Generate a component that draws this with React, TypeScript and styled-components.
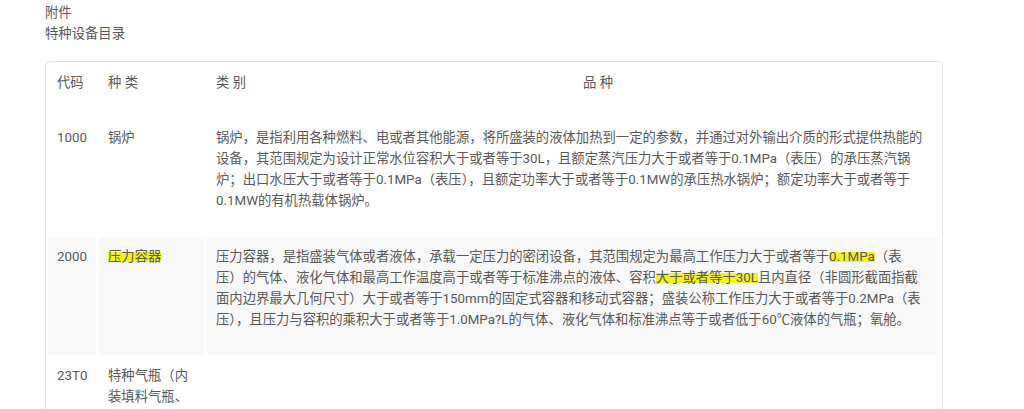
import React from 'react';
import styled, { createGlobalStyle } from 'styled-components';

const GlobalStyle = createGlobalStyle`
  html, body {
    margin: 0;
    padding: 0;
    background: #fff;
    overflow: hidden;
  }
  body {
    font-family: Roboto, "Noto Sans CJK SC", sans-serif;
    font-size: 13.33px;
    line-height: 21px;
    color: #595959;
  }
`;

function Mark({ children }: { children: React.ReactNode }) {
  return <Styled.Highlight>{children}</Styled.Highlight>;
}

const rows: { code: string; name: React.ReactNode; lines: React.ReactNode[] }[] = [
  {
    code: '1000',
    name: '锅炉',
    lines: [
      '锅炉，是指利用各种燃料、电或者其他能源，将所盛装的液体加热到一定的参数，并通过对外输出介质的形式提供热能的',
      '设备，其范围规定为设计正常水位容积大于或者等于30L，且额定蒸汽压力大于或者等于0.1MPa（表压）的承压蒸汽锅',
      '炉；出口水压大于或者等于0.1MPa（表压），且额定功率大于或者等于0.1MW的承压热水锅炉；额定功率大于或者等于',
      '0.1MW的有机热载体锅炉。',
    ],
  },
  {
    code: '2000',
    name: <Mark>压力容器</Mark>,
    lines: [
      <>压力容器，是指盛装气体或者液体，承载一定压力的密闭设备，其范围规定为最高工作压力大于或者等于<Mark>0.1MPa</Mark>（表</>,
      <>压）的气体、液化气体和最高工作温度高于或者等于标准沸点的液体、容积<Mark>大于或者等于30L</Mark>且内直径（非圆形截面指截</>,
      '面内边界最大几何尺寸）大于或者等于150mm的固定式容器和移动式容器；盛装公称工作压力大于或者等于0.2MPa（表',
      '压），且压力与容积的乘积大于或者等于1.0MPa?L的气体、液化气体和标准沸点等于或者低于60℃液体的气瓶；氧舱。',
    ],
  },
  {
    code: '23T0',
    name: '特种气瓶（内装填料气瓶、焊接绝热气瓶）',
    lines: [],
  },
];

const App = () => {
  return (
    <Styled.Page>
      <GlobalStyle />
      <Styled.Title>附件</Styled.Title>
      <Styled.Title>特种设备目录</Styled.Title>
      <Styled.Card>
        <Styled.Table>
          <colgroup>
            <col style={{ width: 48 }} />
            <col style={{ width: 105 }} />
            <col style={{ width: 48 }} />
            <col />
          </colgroup>
          <thead>
            <tr>
              <Styled.Head>代码</Styled.Head>
              <Styled.Head>种 类</Styled.Head>
              <Styled.Head>类 别</Styled.Head>
              <Styled.Head $center>品 种</Styled.Head>
            </tr>
          </thead>
          <tbody>
            {rows.map((row, i) => (
              <Styled.Row key={row.code} $striped={i % 2 === 1}>
                <td className="code">{row.code}</td>
                <td>{row.name}</td>
                <td colSpan={2}>
                  {row.lines.map((line, j) => (
                    <Styled.Line key={j}>{line}</Styled.Line>
                  ))}
                </td>
              </Styled.Row>
            ))}
          </tbody>
        </Styled.Table>
      </Styled.Card>
    </Styled.Page>
  );
};

export default App;

const Styled = {
  Page: styled.div`
    padding: 2px 81px 0 45px;
  `,
  Title: styled.p`
    margin: 0;
    line-height: 21px;
  `,
  Card: styled.div`
    margin-top: 17px;
    height: 400px;
    border: 1px solid #e3e3e3;
    border-radius: 4px;
  `,
  Table: styled.table`
    width: 100%;
    table-layout: fixed;
    border-collapse: separate;
    border-spacing: 3px 2px;
    margin-left: -1px;
  `,
  Head: styled.th<{ $center?: boolean }>`
    padding: 8px 9px 24px;
    font-weight: normal;
    text-align: ${(p) => (p.$center ? 'center' : 'left')};
    vertical-align: top;
    white-space: nowrap;
  `,
  Row: styled.tr<{ $striped: boolean }>`
    td {
      padding: 8px 9px 25px;
      vertical-align: top;
      background: ${(p) => (p.$striped ? '#f8f8f8' : '#fff')};
    }
    td.code {
      white-space: nowrap;
      overflow: visible;
    }
  `,
  Line: styled.span`
    display: block;
    white-space: nowrap;
  `,
  Highlight: styled.span`
    background: linear-gradient(
      transparent 22%,
      #f5f21a 22%,
      #f5f21a 88%,
      transparent 88%
    );
  `,
};
